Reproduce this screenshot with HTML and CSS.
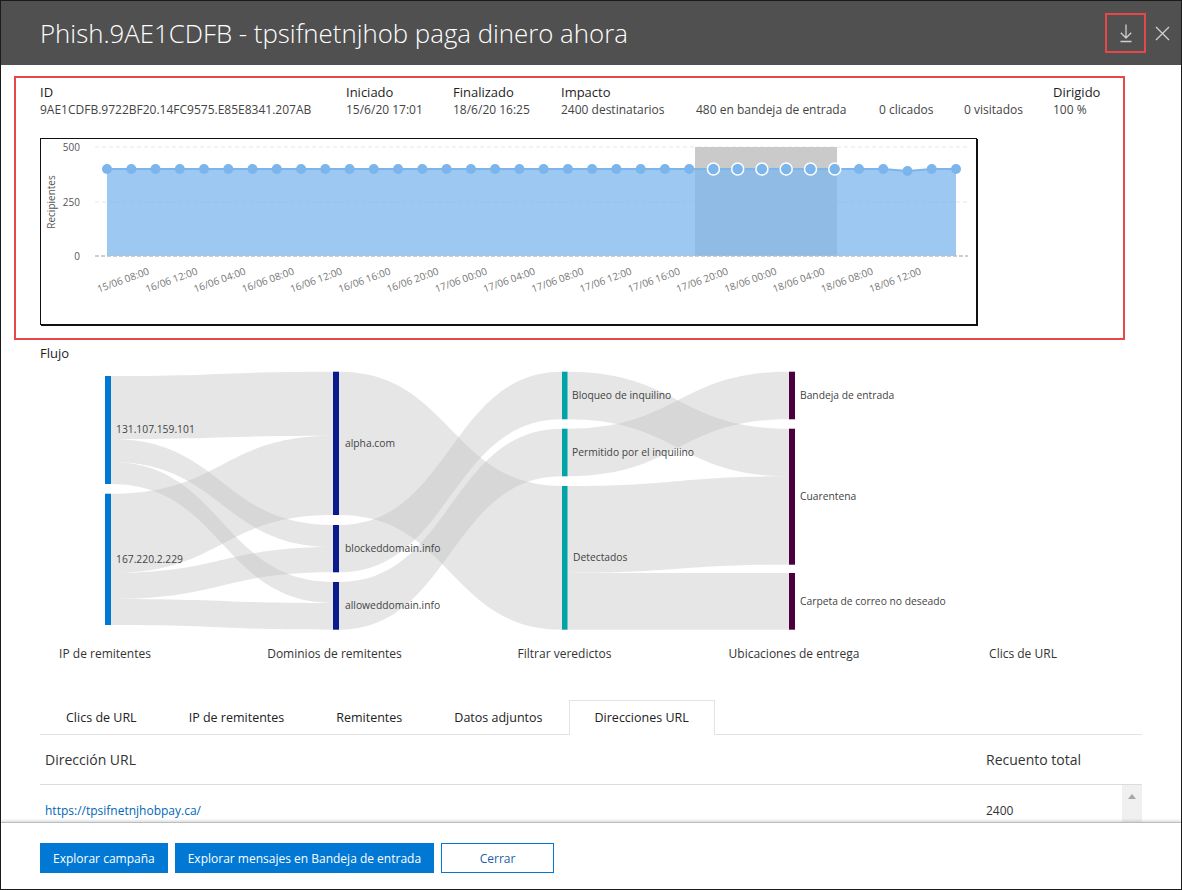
FILE: index.html
```html
<!DOCTYPE html>
<html lang="es">
<head>
<meta charset="utf-8">
<title>Phish.9AE1CDFB</title>
<link rel="stylesheet" href="styles.css">
</head>
<body>
<div class="dialog">
  <header class="header">
    <h1 class="title">Phish.9AE1CDFB - tpsifnetnjhob paga dinero ahora</h1>
    <div class="header-actions">
      <span class="download">
        <svg width="16" height="20" viewBox="0 0 16 20"><path d="M8 1.5V15M2.8 9.8L8 15l5.2-5.2M2.5 18.5h11" fill="none" stroke="#cfcfcf" stroke-width="1.3"/></svg>
      </span>
      <span class="close">
        <svg width="15" height="15" viewBox="0 0 15 15"><path d="M1 1l13 13M14 1L1 14" fill="none" stroke="#cfcfcf" stroke-width="1.3"/></svg>
      </span>
    </div>
  </header>

  <main class="body">
    <section class="summary">
      <div class="facts">
        <div class="fact-label">ID</div>
        <div class="fact-label">Iniciado</div>
        <div class="fact-label">Finalizado</div>
        <div class="fact-label">Impacto</div>
        <div class="fact-label"></div>
        <div class="fact-label"></div>
        <div class="fact-label"></div>
        <div class="fact-label">Dirigido</div>
        <div class="fact-value">9AE1CDFB.9722BF20.14FC9575.E85E8341.207AB</div>
        <div class="fact-value">15/6/20 17:01</div>
        <div class="fact-value">18/6/20 16:25</div>
        <div class="fact-value">2400 destinatarios</div>
        <div class="fact-value">480 en bandeja de entrada</div>
        <div class="fact-value">0 clicados</div>
        <div class="fact-value">0 visitados</div>
        <div class="fact-value">100 %</div>
      </div>

      <div class="chart">
        <svg class="chart-svg" width="935" height="185" viewBox="0 0 935 185">
          <g transform="translate(-41,-139)">
            <line class="grid" x1="95" y1="147" x2="968" y2="147"/>
            <line class="grid" x1="95" y1="202" x2="968" y2="202"/>
            <text class="axis" x="80" y="150.5" text-anchor="end">500</text>
            <text class="axis" x="80" y="205.5" text-anchor="end">250</text>
            <text class="axis" x="80" y="259.5" text-anchor="end">0</text>
            <text class="axis-title" transform="translate(55,202) rotate(-90)" text-anchor="middle">Recipientes</text>
            <rect class="selection" x="695" y="147" width="142" height="109"/>
            <path class="area" d="M107,256 L107,169 L883.2,169 L907.5,171 L931.7,169 L956,169 L956,256 Z"/>
            <polyline class="line" points="107,169 883.2,169 907.5,171 931.7,169 956,169"/>
            <line class="baseline" x1="95" y1="256" x2="968" y2="256"/>
            <g class="dots">
              <circle cx="107" cy="169" r="5"/><circle cx="131.3" cy="169" r="5"/><circle cx="155.5" cy="169" r="5"/><circle cx="179.8" cy="169" r="5"/><circle cx="204" cy="169" r="5"/><circle cx="228.3" cy="169" r="5"/><circle cx="252.5" cy="169" r="5"/><circle cx="276.8" cy="169" r="5"/><circle cx="301.1" cy="169" r="5"/><circle cx="325.3" cy="169" r="5"/><circle cx="349.6" cy="169" r="5"/><circle cx="373.8" cy="169" r="5"/><circle cx="398.1" cy="169" r="5"/><circle cx="422.3" cy="169" r="5"/><circle cx="446.6" cy="169" r="5"/><circle cx="470.9" cy="169" r="5"/><circle cx="495.1" cy="169" r="5"/><circle cx="519.4" cy="169" r="5"/><circle cx="543.6" cy="169" r="5"/><circle cx="567.9" cy="169" r="5"/><circle cx="592.1" cy="169" r="5"/><circle cx="616.4" cy="169" r="5"/><circle cx="640.7" cy="169" r="5"/><circle cx="664.9" cy="169" r="5"/><circle cx="689.2" cy="169" r="5"/>
              <circle class="sel" cx="713.4" cy="169" r="6"/><circle class="sel" cx="737.7" cy="169" r="6"/><circle class="sel" cx="761.9" cy="169" r="6"/><circle class="sel" cx="786.2" cy="169" r="6"/><circle class="sel" cx="810.5" cy="169" r="6"/><circle class="sel" cx="834.7" cy="169" r="6"/>
              <circle cx="859" cy="169" r="5"/><circle cx="883.2" cy="169" r="5"/><circle cx="907.5" cy="171" r="5"/><circle cx="931.7" cy="169" r="5"/><circle cx="956" cy="169" r="5"/>
            </g>
            <g class="xlabels" text-anchor="end">
              <text transform="translate(150,274) rotate(-20)">15/06 08:00</text>
              <text transform="translate(198.3,274) rotate(-20)">16/06 12:00</text>
              <text transform="translate(246.5,274) rotate(-20)">16/06 04:00</text>
              <text transform="translate(294.8,274) rotate(-20)">16/06 08:00</text>
              <text transform="translate(343,274) rotate(-20)">16/06 12:00</text>
              <text transform="translate(391.3,274) rotate(-20)">16/06 16:00</text>
              <text transform="translate(439.5,274) rotate(-20)">16/06 20:00</text>
              <text transform="translate(487.8,274) rotate(-20)">17/06 00:00</text>
              <text transform="translate(536,274) rotate(-20)">17/06 04:00</text>
              <text transform="translate(584.3,274) rotate(-20)">17/06 08:00</text>
              <text transform="translate(632.5,274) rotate(-20)">17/06 12:00</text>
              <text transform="translate(680.8,274) rotate(-20)">17/06 16:00</text>
              <text transform="translate(729,274) rotate(-20)">17/06 20:00</text>
              <text transform="translate(777.3,274) rotate(-20)">18/06 00:00</text>
              <text transform="translate(825.5,274) rotate(-20)">18/06 04:00</text>
              <text transform="translate(873.8,274) rotate(-20)">18/06 08:00</text>
              <text transform="translate(922,274) rotate(-20)">18/06 12:00</text>
            </g>
          </g>
        </svg>
      </div>
    </section>

    <section class="flow">
      <div class="flow-title">Flujo</div>
      <svg class="sankey" width="1102" height="306" viewBox="0 0 1102 306">
        <g transform="translate(-40,-362)">
          <g class="links">
            <path d="M111,376 C222,376 222,371.7 333,371.7 L333,435.7 C222,435.7 222,439 111,439 Z"/>
            <path d="M111,439 C222,439 222,525 333,525 L333,547 C222,547 222,462 111,462 Z"/>
            <path d="M111,462 C222,462 222,582 333,582 L333,603 C222,603 222,484 111,484 Z"/>
            <path d="M111,493.7 C222,493.7 222,435.7 333,435.7 L333,515 C222,515 222,573 111,573 Z"/>
            <path d="M111,573 C222,573 222,547 333,547 L333,572.3 C222,572.3 222,599 111,599 Z"/>
            <path d="M111,599 C222,599 222,603 333,603 L333,629.7 C222,629.7 222,625 111,625 Z"/>
            <path d="M339,371.7 C450.5,371.7 450.5,486 562,486 L562,629.7 C450.5,629.7 450.5,515 339,515 Z"/>
            <path d="M339,525 C450.5,525 450.5,371.7 562,371.7 L562,419.3 C450.5,419.3 450.5,572.3 339,572.3 Z"/>
            <path d="M339,582 C450.5,582 450.5,428.7 562,428.7 L562,476.3 C450.5,476.3 450.5,629.7 339,629.7 Z"/>
            <path d="M567,371.7 C678,371.7 678,428.7 789,428.7 L789,476.3 C678,476.3 678,419.3 567,419.3 Z"/>
            <path d="M567,428.7 C678,428.7 678,371.7 789,371.7 L789,419.3 C678,419.3 678,476.3 567,476.3 Z"/>
            <path d="M567,486 C678,486 678,476.3 789,476.3 L789,564.7 C678,564.7 678,573 567,573 Z"/>
            <path d="M567,573 C678,573 678,573 789,573 L789,629.7 C678,629.7 678,629.7 567,629.7 Z"/>
          </g>
          <g class="n-ip">
            <rect x="105" y="376" width="6" height="108"/>
            <rect x="105" y="493.7" width="6" height="131.3"/>
          </g>
          <g class="n-dom">
            <rect x="333" y="371.7" width="6" height="143.3"/>
            <rect x="333" y="525" width="6" height="47.3"/>
            <rect x="333" y="582" width="6" height="47.7"/>
          </g>
          <g class="n-ver">
            <rect x="562" y="371.7" width="5.5" height="47.6"/>
            <rect x="562" y="428.7" width="5.5" height="47.6"/>
            <rect x="562" y="486" width="5.5" height="143.7"/>
          </g>
          <g class="n-loc">
            <rect x="789" y="371.7" width="6" height="47.6"/>
            <rect x="789" y="428.7" width="6" height="136"/>
            <rect x="789" y="573" width="6" height="56.7"/>
          </g>
          <g class="node-label">
            <text x="116" y="433">131.107.159.101</text>
            <text x="116" y="563">167.220.2.229</text>
            <text x="345" y="447">alpha.com</text>
            <text x="345" y="552">blockeddomain.info</text>
            <text x="345" y="609">alloweddomain.info</text>
            <text x="572" y="399">Bloqueo de inquilino</text>
            <text x="572" y="456">Permitido por el inquilino</text>
            <text x="573" y="561">Detectados</text>
            <text x="800" y="399">Bandeja de entrada</text>
            <text x="800" y="500">Cuarentena</text>
            <text x="800" y="605">Carpeta de correo no deseado</text>
          </g>
          <g class="col-label" text-anchor="middle">
            <text x="105" y="658">IP de remitentes</text>
            <text x="334.5" y="658">Dominios de remitentes</text>
            <text x="564.5" y="658">Filtrar veredictos</text>
            <text x="794" y="658">Ubicaciones de entrega</text>
            <text x="1023" y="658">Clics de URL</text>
          </g>
        </g>
      </svg>
    </section>

    <section class="details">
      <div class="tabs">
        <div class="tab">Clics de URL</div>
        <div class="tab">IP de remitentes</div>
        <div class="tab">Remitentes</div>
        <div class="tab">Datos adjuntos</div>
        <div class="tab tab-active">Direcciones URL</div>
      </div>
      <div class="thead">
        <div class="col-url">Dirección URL</div>
        <div class="col-count">Recuento total</div>
      </div>
      <div class="trow">
        <div class="col-url"><a class="link" href="#">https://tpsifnetnjhobpay.ca/</a></div>
        <div class="col-count-cell">2400</div>
        <div class="scrollbar"><span class="scroll-up"></span></div>
      </div>
    </section>
  </main>

  <footer class="footer">
    <button class="btn btn-primary">Explorar campaña</button>
    <button class="btn btn-primary">Explorar mensajes en Bandeja de entrada</button>
    <button class="btn btn-secondary">Cerrar</button>
  </footer>
</div>
</body>
</html>
```

FILE: styles.css
```css
html, body {
  margin: 0;
  padding: 0;
  background: #fff;
}

body {
  font-family: "Open Sans", "Noto Sans", sans-serif;
  color: #222;
}

.dialog {
  width: 1182px;
  height: 890px;
  box-sizing: border-box;
  border: 1px solid #1b1b1b;
  display: flex;
  flex-direction: column;
  overflow: hidden;
  background: #fff;
}

/* Header */
.header {
  flex: none;
  height: 64px;
  background: #505050;
  display: flex;
  align-items: center;
  padding: 0 11px 0 39px;
}

.title {
  flex: 1;
  margin: 0;
  font-size: 25.8px;
  font-weight: 300;
  color: #fff;
}

.header-actions {
  display: flex;
  align-items: center;
}

.download {
  width: 41px;
  height: 40px;
  box-sizing: border-box;
  border: 2px solid #e8474a;
  display: flex;
  align-items: center;
  justify-content: center;
}

.download svg,
.close svg {
  display: block;
}

.close {
  margin-left: 9px;
}

/* Body */
.body {
  flex: 1;
  overflow: hidden;
  padding: 0 39px;
}

.summary {
  margin: 11px 0 0 -26px;
  width: 1111px;
  box-sizing: border-box;
  border: 2px solid #e8474a;
  padding: 5px 0 13px 24px;
}

.facts {
  display: grid;
  grid-template-columns: 306px 107px 108px 135px 183px 85px 89px auto;
}

.fact-label {
  font-size: 13px;
  line-height: 18px;
  height: 18px;
  color: #1e1e1e;
}

.fact-value {
  font-size: 12px;
  line-height: 18px;
  color: #444;
}

.chart {
  margin-top: 19px;
  width: 937px;
  height: 187px;
  box-sizing: border-box;
  border: 1px solid #111;
  box-shadow: 1px 1px 0 #111;
}

.chart-svg {
  display: block;
}

.chart-svg .grid {
  stroke: #e6e6e6;
  stroke-width: 1;
  stroke-dasharray: 4 3;
}

.chart-svg .baseline {
  stroke: #bdbdbd;
  stroke-width: 1.5;
  stroke-dasharray: 4 2;
}

.chart-svg .axis {
  font-size: 10px;
  fill: #555;
}

.chart-svg .axis-title {
  font-size: 10px;
  fill: #555;
}

.chart-svg .selection {
  fill: #cacaca;
}

.chart-svg .area {
  fill: rgba(124, 181, 236, 0.75);
}

.chart-svg .line {
  fill: none;
  stroke: #7cb5ec;
  stroke-width: 2;
}

.chart-svg .dots circle {
  fill: #7cb5ec;
}

.chart-svg .dots circle.sel {
  stroke: #fff;
  stroke-width: 1.5;
}

.chart-svg .xlabels text {
  font-size: 10px;
  fill: #777;
}

/* Flow */
.flow-title {
  margin-top: 4px;
  font-size: 13px;
  line-height: 18px;
  color: #1e1e1e;
}

.sankey {
  display: block;
}

.sankey .links path {
  fill: #c0c0c0;
  fill-opacity: 0.4;
}

.sankey .n-ip rect { fill: #0078d4; }
.sankey .n-dom rect { fill: #0a1c8c; }
.sankey .n-ver rect { fill: #00a4a7; }
.sankey .n-loc rect { fill: #4a003f; }

.sankey .node-label text {
  font-size: 10.3px;
  fill: #444;
}

.sankey .col-label text {
  font-size: 12px;
  fill: #333;
}

/* Tabs and table */
.details {
  margin-top: 32px;
}

.tabs {
  display: flex;
  height: 35px;
  box-sizing: border-box;
  border-bottom: 1px solid #e3e3e3;
}

.tab {
  padding: 0 25px;
  height: 35px;
  box-sizing: border-box;
  line-height: 33px;
  font-size: 12.5px;
  color: #222;
  border: 1px solid transparent;
  border-bottom: none;
}

.tab-active {
  border-color: #e3e3e3;
  background: #fff;
}

.thead {
  display: flex;
  align-items: center;
  height: 50px;
  box-sizing: border-box;
  border-bottom: 1px solid #dcdcdc;
  font-size: 14px;
  color: #333;
}

.col-url {
  flex: 1;
  padding-left: 5px;
}

.col-count {
  width: 156px;
}

.trow {
  display: flex;
  align-items: stretch;
  height: 50px;
}

.trow .col-url,
.col-count-cell {
  display: flex;
  align-items: center;
  font-size: 12px;
  color: #333;
}

.col-count-cell {
  width: 136px;
}

.link {
  color: #0067b8;
  text-decoration: none;
  font-size: 12px;
}

.scrollbar {
  width: 20px;
  background: #f0f0f0;
  position: relative;
}

.scroll-up {
  position: absolute;
  left: 6px;
  top: 9px;
  width: 0;
  height: 0;
  border-left: 4px solid transparent;
  border-right: 4px solid transparent;
  border-bottom: 5px solid #a6a6a6;
}

/* Footer */
.footer {
  flex: none;
  height: 67px;
  box-sizing: border-box;
  border-top: 1px solid #bdbdbd;
  box-shadow: 0 -1px 3px rgba(0, 0, 0, 0.18);
  background: #fff;
  position: relative;
  padding: 20px 0 0 39px;
  display: flex;
  align-items: flex-start;
  gap: 7px;
}

.btn {
  height: 30px;
  padding: 0 12px;
  font-family: "Open Sans", "Noto Sans", sans-serif;
  font-size: 12px;
  border: 1px solid #0078d4;
  cursor: pointer;
}

.btn-primary {
  background: #0078d4;
  color: #fff;
}

.btn-secondary {
  background: #fff;
  color: #1a5fa6;
  min-width: 113px;
}
```
